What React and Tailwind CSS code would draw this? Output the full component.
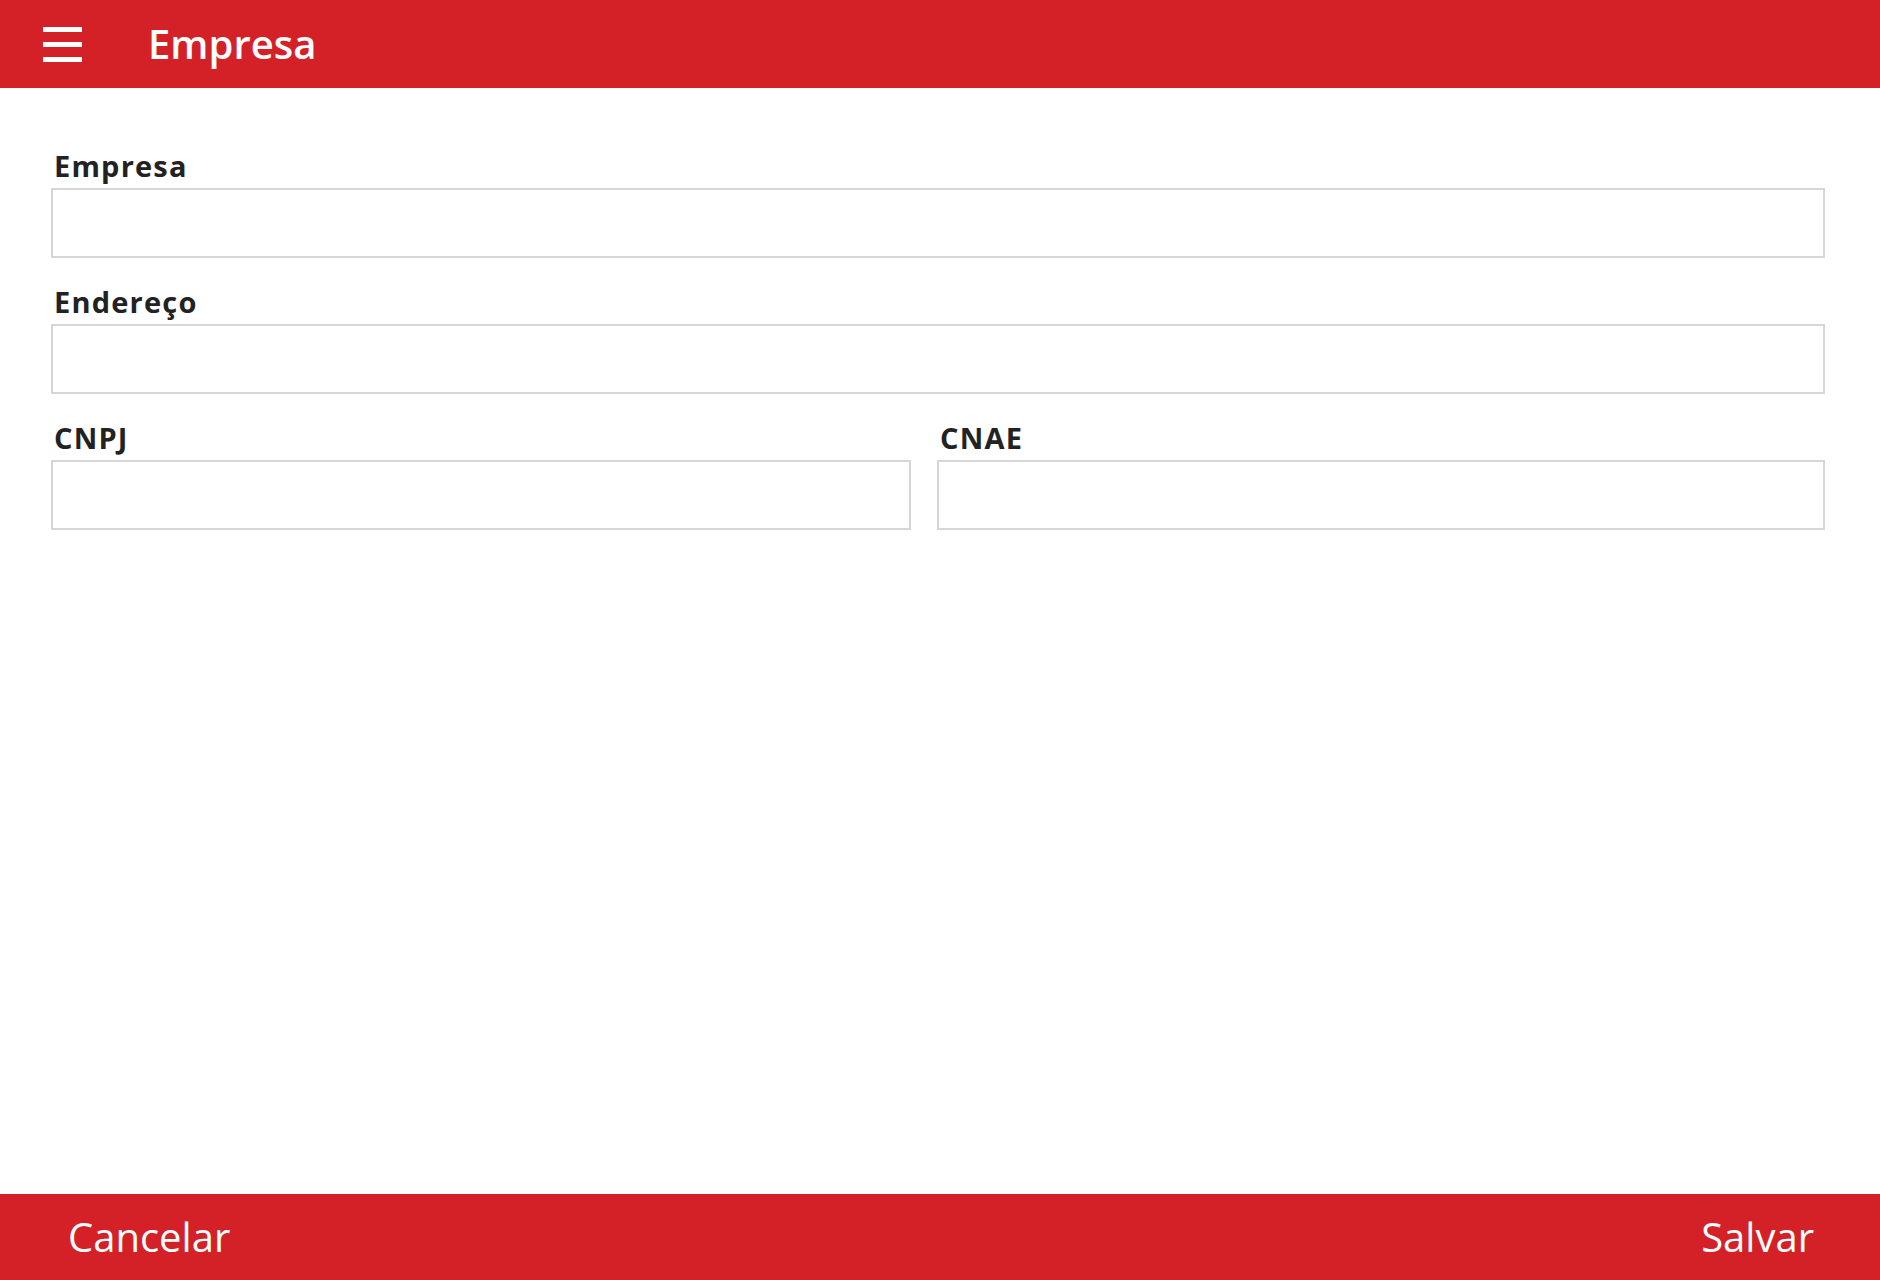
import React from "react";

const Field = ({ label }) => (
    <div className="flex flex-col">
        <label className="pl-[3px] text-[29px] leading-[30px] font-bold tracking-[1.2px] text-[#222]" style={{ fontFamily: "'Open Sans', sans-serif" }}>
            {label}
        </label>
        <input type="text" className="mt-[7px] h-[70px] w-full border-2 border-[#d6d6d6] bg-white outline-none" />
    </div>
);

const App = () => {
    return (
        <div className="flex h-[1280px] w-full flex-col bg-white" style={{ fontFamily: "'Open Sans', sans-serif" }}>
            {/* Cabeçalho */}
            <header className="flex h-[88px] shrink-0 items-center bg-[#d42127] text-white">
                <button className="ml-[43px] flex h-[39px] w-[39px] flex-col justify-center gap-[10px]">
                    <span className="block h-[5px] w-[39px] bg-white" />
                    <span className="block h-[5px] w-[39px] bg-white" />
                    <span className="block h-[5px] w-[39px] bg-white" />
                </button>
                <h1 className="ml-[66px] text-[40px] font-semibold leading-none">Empresa</h1>
            </header>

            {/* Formulário */}
            <main className="flex flex-1 flex-col gap-[29px] pl-[51px] pr-[55px] pt-[63px]">
                <Field label="Empresa" />
                <Field label="Endereço" />
                <div className="grid grid-cols-[860px_1fr] gap-[26px]">
                    <Field label="CNPJ" />
                    <Field label="CNAE" />
                </div>
            </main>

            {/* Rodapé */}
            <footer className="flex h-[86px] shrink-0 items-center justify-between bg-[#d42127] pl-[68px] pr-[66px] text-white">
                <button className="text-[40px] font-normal leading-none">Cancelar</button>
                <button className="text-[40px] font-normal leading-none">Salvar</button>
            </footer>
        </div>
    );
};

export default App;
